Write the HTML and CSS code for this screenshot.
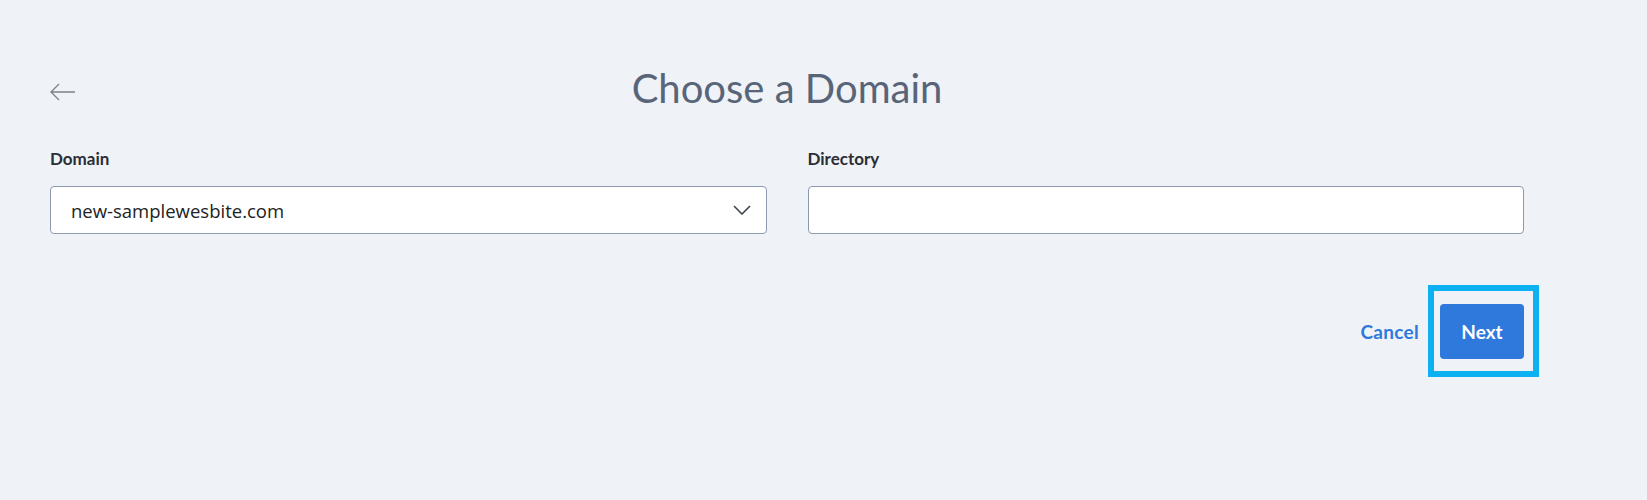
FILE: index.html
```html
<!DOCTYPE html>
<html>
<head>
  <title>Choose a Domain</title>
  <link rel="stylesheet" href="styles.css">
</head>
<body>
  <div class="page">
    <div class="header">
      <a class="back" href="#">
        <svg width="26" height="18" viewBox="0 0 26 18">
          <path d="M9 1 L1 9 L9 17 M1 9 H25" fill="none" stroke="#7f8389" stroke-width="1.3"/>
        </svg>
      </a>
      <h1>Choose a Domain</h1>
      <div></div>
    </div>

    <div class="fields">
      <div class="field">
        <label>Domain</label>
        <div class="box select">
          <span>new-samplewesbite.com</span>
          <svg width="18" height="10" viewBox="0 0 18 10">
            <path d="M1 1 L9 9 L17 1" fill="none" stroke="#3d4450" stroke-width="1.6"/>
          </svg>
        </div>
      </div>
      <div class="field">
        <label>Directory</label>
        <div class="box"></div>
      </div>
    </div>

    <div class="actions">
      <a class="cancel" href="#">Cancel</a>
      <span class="focus">
        <button class="next">Next</button>
      </span>
    </div>
  </div>
</body>
</html>
```
FILE: styles.css
```css
body {
  margin: 0;
  background: #eff2f7;
  font-family: Lato, "Liberation Sans", sans-serif;
}
.page {
  padding: 64px 123px 120px 50px;
}
.header {
  display: grid;
  grid-template-columns: 1fr auto 1fr;
  align-items: center;
}
.back { display: flex; margin-top: 7px; }
h1 {
  margin: 0;
  font-size: 40px;
  line-height: 48px;
  font-weight: 400;
  color: #586579;
}
.fields {
  display: grid;
  grid-template-columns: 1fr 1fr;
  gap: 41px;
  margin-top: 37px;
}
label {
  display: block;
  font-size: 17px;
  line-height: 20px;
  font-weight: 700;
  color: #2b2e34;
  margin-bottom: 17px;
}
.box {
  height: 48px;
  box-sizing: border-box;
  background: #fff;
  border: 1px solid #8d9bb0;
  border-radius: 4px;
  padding: 0 15px 0 20px;
  display: flex;
  align-items: center;
  justify-content: space-between;
  font-family: "Open Sans", sans-serif;
  font-size: 18.5px;
  color: #222;
}
.actions {
  display: flex;
  justify-content: flex-end;
  align-items: center;
  gap: 21px;
  margin-top: 70px;
}
.cancel {
  color: #2f79dc;
  text-decoration: none;
  font-size: 19px;
  letter-spacing: 0.3px;
  font-weight: 700;
}
.focus {
  position: relative;
  display: flex;
}
.focus::after {
  content: "";
  position: absolute;
  top: -19px;
  left: -12px;
  right: -15px;
  bottom: -18px;
  border: 6px solid #0db1f2;
}
.next {
  width: 84px;
  height: 55px;
  border: none;
  border-radius: 4px;
  background: #2f78dc;
  color: #fff;
  font-family: Lato, sans-serif;
  font-size: 19px;
  font-weight: 700;
}
```
